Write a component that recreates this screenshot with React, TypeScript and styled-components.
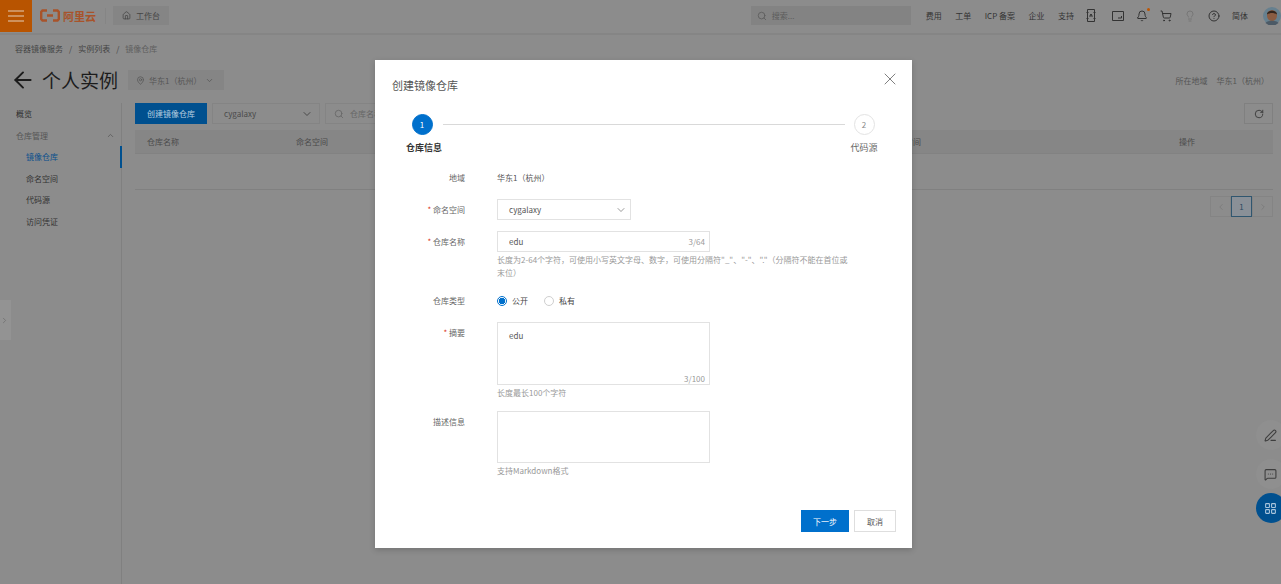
import React from 'react';
import styled, { createGlobalStyle } from 'styled-components';
import {
  Bell, ChevronDown, ChevronLeft, ChevronRight, ChevronUp, CircleHelp, Home, Lightbulb,
  LayoutGrid, MapPin, MessageSquareMore, PenLine, RotateCw, Search, ShoppingCart, X, ArrowLeft,
} from 'lucide-react';

const GlobalStyle = createGlobalStyle`
  html, body { margin: 0; padding: 0; background: #8c8c8c; }
  * { box-sizing: border-box; }
  body { font-family: "Noto Sans CJK SC", "Noto Sans", "Liberation Sans", sans-serif; font-size: 8px; color: #3a3a3a; }
`;

const Page = styled.div`
  position: relative;
  width: 1281px;
  height: 584px;
  overflow: hidden;
  background: #8c8c8c;
`;

const TopBar = styled.header`
  height: 35px;
  display: flex;
  align-items: center;
  padding-bottom: 2px;
  border-bottom: 2px solid #858585;
`;

const MenuButton = styled.div`
  width: 32px;
  height: 33px;
  background: #b85400;
  display: flex;
  align-items: center;
  justify-content: center;
`;

const Logo = styled.div`
  display: flex;
  align-items: center;
  gap: 3px;
  margin-left: 8px;
  color: #a8532a;
  font-size: 11px;
  font-weight: 700;
  padding-right: 9px;
  border-right: 1px solid #858585;
`;

const Workbench = styled.div`
  margin-left: 7px;
  width: 56px;
  height: 19px;
  background: #858585;
  display: flex;
  align-items: center;
  justify-content: center;
  gap: 5px;
  color: #444;
`;

const GlobalSearch = styled.div`
  margin-left: auto;
  width: 160px;
  height: 19px;
  background: #838383;
  color: #5c5c5c;
  display: flex;
  align-items: center;
  gap: 5px;
  padding-left: 6px;
`;

const TopNav = styled.nav`
  display: flex;
  align-items: center;
  margin-left: 15px;
  color: #333;
  white-space: nowrap;
`;

const NavLinks = styled.div`
  display: flex;
  gap: 13.5px;
  margin-right: 12px;
`;

const NavIcons = styled.div`
  display: flex;
  align-items: center;
  gap: 12px;
  margin-right: 12px;
`;

const IconSlot = styled.span<{ $muted?: boolean; $wide?: boolean }>`
  position: relative;
  display: flex;
  margin-right: ${p => (p.$wide ? 4 : 0)}px;
  color: ${p => (p.$muted ? '#767676' : '#333')};
`;

const Dot = styled.i`
  position: absolute;
  top: -2px;
  right: -2px;
  width: 3px;
  height: 3px;
  border-radius: 50%;
  background: #bd5500;
`;

const Avatar = styled.svg`
  margin-left: 15px;
  display: block;
`;

const Breadcrumb = styled.div`
  margin: 7px 0 0 15px;
  height: 13px;
  line-height: 13px;
  display: flex;
  gap: 6px;
  color: #444;
`;

const CrumbLast = styled.span`
  color: #5e5e5e;
`;

const TitleRow = styled.div`
  margin: 10px 8px 0 15px;
  height: 30px;
  display: flex;
  align-items: center;
  color: #1c1c1c;
`;

const BackArrow = styled(ArrowLeft)`
  margin-left: -5px;
`;

const PageTitle = styled.h1`
  margin: 0 10px 0 6px;
  font-size: 19px;
  font-weight: 400;
  line-height: 30px;
`;

const RegionPicker = styled.div`
  width: 96px;
  height: 20px;
  background: #858585;
  color: #555;
  display: flex;
  align-items: center;
  gap: 4px;
  padding-left: 8px;
`;

const RegionInfo = styled.div`
  margin-left: auto;
  margin-right: 4px;
  display: flex;
  gap: 9px;
  color: #555;
`;

const Body = styled.div`
  margin-top: 8px;
  display: flex;
  height: 481px;
`;

const Sidebar = styled.aside`
  width: 122px;
  flex: none;
  border-right: 1px solid #808080;
  position: relative;
`;

const SideItem = styled.div<{ $sub?: boolean; $active?: boolean; $strong?: boolean }>`
  height: 21.6px;
  line-height: 21.6px;
  padding-left: ${p => (p.$sub ? 26 : 16)}px;
  padding-right: 6px;
  display: flex;
  align-items: center;
  justify-content: space-between;
  color: ${p => (p.$active ? '#0a4f8c' : p.$strong ? '#2e2e2e' : p.$sub ? '#333' : '#555')};
  border-right: ${p => (p.$active ? '2px solid #00508f' : '0')};
  margin-right: ${p => (p.$active ? '-1px' : '0')};
`;

const Content = styled.main`
  flex: 1;
  margin: 0 8px 0 13px;
`;

const Toolbar = styled.div`
  display: flex;
  gap: 5px;
  height: 21px;
`;

const PrimaryBar = styled.div`
  width: 72px;
  background: #00508f;
  color: #b8cfe0;
  display: flex;
  align-items: center;
  justify-content: center;
`;

const GhostSelect = styled.div`
  width: 108px;
  border: 1px solid #848484;
  padding: 0 6px 0 11px;
  display: flex;
  align-items: center;
  justify-content: space-between;
  color: #4a4a4a;
`;

const GhostSearch = styled.div`
  width: 300px;
  border: 1px solid #848484;
  padding-left: 8px;
  display: flex;
  align-items: center;
  gap: 6px;
  color: #666;
`;

const RefreshButton = styled.div`
  margin-left: auto;
  width: 29px;
  border: 1px solid #808080;
  display: flex;
  align-items: center;
  justify-content: center;
  color: #333;
`;

const TableHead = styled.div`
  margin-top: 6px;
  height: 24px;
  background: #868686;
  border-bottom: 1px solid #828282;
  display: grid;
  grid-template-columns: 149px 593px 290px 1fr;
  align-items: center;
  padding-left: 12px;
  color: #4a4a4a;
`;

const EmptyRow = styled.div`
  height: 36px;
  border-bottom: 1px solid #808080;
`;

const Pager = styled.div`
  margin-top: 6px;
  display: flex;
  justify-content: flex-end;
  height: 21px;
`;

const PageCell = styled.div<{ $active?: boolean }>`
  width: 21px;
  border: 1px solid ${p => (p.$active ? '#30566f' : '#848484')};
  color: ${p => (p.$active ? '#2c4a60' : '#7a7a7a')};
  background: ${p => (p.$active ? '#8a9097' : 'transparent')};
  display: flex;
  align-items: center;
  justify-content: center;
`;

const LeftTab = styled.div`
  position: absolute;
  left: 0;
  top: 300px;
  width: 11px;
  height: 40px;
  background: #939393;
  color: #6e6e6e;
  display: flex;
  align-items: center;
`;

const FloatButton = styled.div<{ $top: number; $primary?: boolean }>`
  position: absolute;
  left: 1256px;
  top: ${p => p.$top}px;
  width: 30px;
  height: 30px;
  border-radius: 50%;
  background: ${p => (p.$primary ? '#00508f' : '#8f8f8f')};
  color: ${p => (p.$primary ? '#a8c4dc' : '#3e3e3e')};
  display: flex;
  align-items: center;
  padding-left: 8px;
`;

const Modal = styled.section`
  position: absolute;
  left: 375px;
  top: 60px;
  width: 537px;
  height: 488px;
  background: #fff;
  padding: 15px 17px 0;
  box-shadow: 0 2px 6px rgba(0, 0, 0, 0.18);
  color: #666;
`;

const CloseButton = styled.div`
  position: absolute;
  top: 9px;
  right: 12px;
  color: #666;
  display: flex;
`;

const ModalTitle = styled.h2`
  margin: 0;
  font-size: 11px;
  font-weight: 400;
  line-height: 20px;
  color: #555;
`;

const Stepper = styled.div`
  margin: 19px 17px 0 13px;
  display: flex;
`;

const Step = styled.div<{ $width: number }>`
  width: ${p => p.$width}px;
  flex: none;
  display: flex;
  flex-direction: column;
  align-items: center;
`;

const StepCircle = styled.div<{ $active?: boolean }>`
  width: 21px;
  height: 21px;
  border-radius: 50%;
  background: ${p => (p.$active ? '#0070cc' : '#fff')};
  border: 1px solid ${p => (p.$active ? '#0070cc' : '#e3e3e3')};
  color: ${p => (p.$active ? '#fff' : '#888')};
  display: flex;
  align-items: center;
  justify-content: center;
  transform: translateX(${p => (p.$active ? '-2px' : '0')});
`;

const StepLabel = styled.div<{ $active?: boolean }>`
  margin-top: 6px;
  font-size: 9px;
  line-height: 13px;
  white-space: nowrap;
  font-weight: ${p => (p.$active ? 700 : 400)};
  color: ${p => (p.$active ? '#333' : '#666')};
`;

const StepLine = styled.div`
  flex: 1;
  height: 1px;
  margin: 10px 5px 0 0;
  background: #d9d9d9;
`;

const Form = styled.div`
  margin-top: 13px;
  display: flex;
  flex-direction: column;
  gap: 11px;
`;

const FormRow = styled.div`
  display: grid;
  grid-template-columns: 73px 1fr;
  column-gap: 32px;
`;

const FieldLabel = styled.div<{ $required?: boolean }>`
  line-height: 21px;
  text-align: right;
  color: #666;
  &::before {
    content: ${p => (p.$required ? '"* "' : '""')};
    color: #d93026;
  }
`;

const StaticValue = styled.div`
  line-height: 21px;
  color: #555;
`;

const SelectBox = styled.div`
  width: 134px;
  height: 21px;
  border: 1px solid #e2e2e2;
  display: flex;
  align-items: center;
  justify-content: space-between;
  padding: 0 3px 0 11px;
  color: #555;
`;

const InputWrap = styled.div<{ $height: number }>`
  position: relative;
  width: 213px;
  height: ${p => p.$height}px;
`;

const TextInput = styled.input`
  display: block;
  width: 100%;
  height: 100%;
  border: 1px solid #e2e2e2;
  padding: 0 11px;
  font: inherit;
  color: #555;
  outline: none;
`;

const TextArea = styled.textarea`
  display: block;
  width: 100%;
  height: 100%;
  border: 1px solid #e2e2e2;
  padding: 6px 11px;
  font: inherit;
  line-height: 13px;
  color: #555;
  outline: none;
  resize: none;
`;

const Counter = styled.span<{ $bottom?: boolean }>`
  position: absolute;
  right: 5px;
  ${p => (p.$bottom ? 'bottom: 0;' : 'top: 4px;')}
  line-height: 13px;
  color: #999;
`;

const Hint = styled.div<{ $spaced?: boolean }>`
  margin-top: 1px;
  margin-bottom: ${p => (p.$spaced ? 1 : 0)}px;
  line-height: 13px;
  color: #999;
  width: 358px;
`;

const RadioGroup = styled.div`
  height: 21px;
  display: flex;
  align-items: center;
  color: #444;
`;

const Radio = styled.span<{ $checked?: boolean }>`
  width: 10px;
  height: 10px;
  border-radius: 50%;
  margin-right: 5px;
  border: 1px solid ${p => (p.$checked ? '#0070cc' : '#cfcfcf')};
  background: ${p => (p.$checked ? 'radial-gradient(circle, #0070cc 0 3px, #fff 3.5px)' : '#fff')};
`;

const RadioText = styled.span`
  margin-right: 16px;
`;

const Footer = styled.div`
  margin-top: 33px;
  margin-right: -1px;
  display: flex;
  justify-content: flex-end;
  gap: 5px;
`;

const FootButton = styled.button<{ $primary?: boolean }>`
  width: ${p => (p.$primary ? 48 : 42)}px;
  height: 22px;
  padding: 0;
  font: inherit;
  background: ${p => (p.$primary ? '#0070cc' : '#fff')};
  color: ${p => (p.$primary ? '#fff' : '#555')};
  border: 1px solid ${p => (p.$primary ? '#0070cc' : '#dedede')};
`;

const HamburgerIcon = () => (
  <svg width="16" height="12" viewBox="0 0 16 12" fill="none" stroke="#e4cdb8" strokeWidth="1.2">
    <path d="M0 1h16M0 6h16M0 11h16" />
  </svg>
);

const LogoMark = () => (
  <svg width="20" height="13" viewBox="0 0 20 13" fill="none" stroke="#a8532a" strokeWidth="2.4">
    <path d="M7 1.500H2.500L1.200 3v7l1.300 1.500H7M13 1.500h4.500L18.800 3v7l-1.300 1.500H13M7 6.500h6" />
  </svg>
);

const ConsoleAppIcon = () => (
  <svg width="10" height="13" viewBox="0 0 10 13" fill="none" stroke="#333" strokeWidth="1">
    <path d="M1.500.5h7v12h-7zM.5 3.500h2M.5 9.500h2M7.500 3.500h2M7.500 9.500h2" />
    <path d="M3.500 7.500L5 5l1.500 2.500M5 5v3" />
  </svg>
);

const InboxIcon = () => (
  <svg width="12" height="10" viewBox="0 0 12 10" fill="none" stroke="#333" strokeWidth="1">
    <path d="M.5.500h11v9H.5z" />
    <path d="M6 7h3.500V5" />
  </svg>
);

const App = () => {
  return (
    <Page>
      <GlobalStyle />
      <TopBar>
        <MenuButton><HamburgerIcon /></MenuButton>
        <Logo><LogoMark />阿里云</Logo>
        <Workbench><Home size={9} />工作台</Workbench>
        <GlobalSearch><Search size={10} />搜索...</GlobalSearch>
        <TopNav>
          <NavLinks>
            <span>费用</span>
            <span>工单</span>
            <span>ICP 备案</span>
            <span>企业</span>
            <span>支持</span>
          </NavLinks>
          <NavIcons>
            <IconSlot $wide><ConsoleAppIcon /></IconSlot>
            <IconSlot><InboxIcon /></IconSlot>
            <IconSlot><Bell size={12} /><Dot /></IconSlot>
            <IconSlot><ShoppingCart size={12} /></IconSlot>
            <IconSlot $muted><Lightbulb size={12} /></IconSlot>
            <IconSlot><CircleHelp size={12} /></IconSlot>
          </NavIcons>
          <span>简体</span>
          <Avatar width="18" height="18" viewBox="0 0 18 18">
            <circle cx="9" cy="9" r="9" fill="#66808f" />
            <ellipse cx="9" cy="8.500" rx="5" ry="5.500" fill="#8a5c42" />
            <path d="M4 7.500C4 2.500 14 2.500 14 7.500 11 5.500 7 5.500 4 7.500z" fill="#33251d" />
            <path d="M2.500 16c2-3 11-3 13 0l-3 2h-7z" fill="#4c5a66" />
          </Avatar>
        </TopNav>
      </TopBar>

      <Breadcrumb>
        <span>容器镜像服务</span><span>/</span><span>实例列表</span><span>/</span><CrumbLast>镜像仓库</CrumbLast>
      </Breadcrumb>

      <TitleRow>
        <BackArrow size={26} strokeWidth={1.8} />
        <PageTitle>个人实例</PageTitle>
        <RegionPicker><MapPin size={9} />华东1（杭州）<ChevronDown size={9} /></RegionPicker>
        <RegionInfo><span>所在地域</span><span>华东1（杭州）</span></RegionInfo>
      </TitleRow>

      <Body>
        <Sidebar>
          <SideItem $strong>概览</SideItem>
          <SideItem>仓库管理<ChevronUp size={9} /></SideItem>
          <SideItem $sub $active>镜像仓库</SideItem>
          <SideItem $sub>命名空间</SideItem>
          <SideItem $sub>代码源</SideItem>
          <SideItem $sub>访问凭证</SideItem>
        </Sidebar>
        <Content>
          <Toolbar>
            <PrimaryBar>创建镜像仓库</PrimaryBar>
            <GhostSelect>cygalaxy<ChevronDown size={12} /></GhostSelect>
            <GhostSearch><Search size={10} />仓库名称</GhostSearch>
            <RefreshButton><RotateCw size={10} /></RefreshButton>
          </Toolbar>
          <TableHead>
            <span>仓库名称</span>
            <span>命名空间</span>
            <span>创建时间</span>
            <span>操作</span>
          </TableHead>
          <EmptyRow />
          <Pager>
            <PageCell><ChevronLeft size={10} /></PageCell>
            <PageCell $active>1</PageCell>
            <PageCell><ChevronRight size={10} /></PageCell>
          </Pager>
        </Content>
      </Body>

      <LeftTab><ChevronRight size={9} /></LeftTab>
      <FloatButton $top={420}><PenLine size={13} /></FloatButton>
      <FloatButton $top={459}><MessageSquareMore size={13} /></FloatButton>
      <FloatButton $top={493} $primary><LayoutGrid size={13} /></FloatButton>

      <Modal>
        <CloseButton><X size={20} strokeWidth={1} /></CloseButton>
        <ModalTitle>创建镜像仓库</ModalTitle>
        <Stepper>
          <Step $width={38}>
            <StepCircle $active>1</StepCircle>
            <StepLabel $active>仓库信息</StepLabel>
          </Step>
          <StepLine />
          <Step $width={28}>
            <StepCircle>2</StepCircle>
            <StepLabel>代码源</StepLabel>
          </Step>
        </Stepper>
        <Form>
          <FormRow>
            <FieldLabel>地域</FieldLabel>
            <StaticValue>华东1（杭州）</StaticValue>
          </FormRow>
          <FormRow>
            <FieldLabel $required>命名空间</FieldLabel>
            <SelectBox>cygalaxy<ChevronDown size={12} strokeWidth={1.2} /></SelectBox>
          </FormRow>
          <FormRow>
            <FieldLabel $required>仓库名称</FieldLabel>
            <div>
              <InputWrap $height={21}>
                <TextInput readOnly value="edu" />
                <Counter>3/64</Counter>
              </InputWrap>
              <Hint>长度为2-64个字符，可使用小写英文字母、数字，可使用分隔符"_"、"-"、"."（分隔符不能在首位或末位）</Hint>
            </div>
          </FormRow>
          <FormRow>
            <FieldLabel>仓库类型</FieldLabel>
            <RadioGroup>
              <Radio $checked /><RadioText>公开</RadioText>
              <Radio /><RadioText>私有</RadioText>
            </RadioGroup>
          </FormRow>
          <FormRow>
            <FieldLabel $required>摘要</FieldLabel>
            <div>
              <InputWrap $height={63}>
                <TextArea readOnly value="edu" />
                <Counter $bottom>3/100</Counter>
              </InputWrap>
              <Hint $spaced>长度最长100个字符</Hint>
            </div>
          </FormRow>
          <FormRow>
            <FieldLabel>描述信息</FieldLabel>
            <div>
              <InputWrap $height={52}>
                <TextArea readOnly value="" />
              </InputWrap>
              <Hint>支持Markdown格式</Hint>
            </div>
          </FormRow>
        </Form>
        <Footer>
          <FootButton $primary>下一步</FootButton>
          <FootButton>取消</FootButton>
        </Footer>
      </Modal>
    </Page>
  );
};

export default App;
